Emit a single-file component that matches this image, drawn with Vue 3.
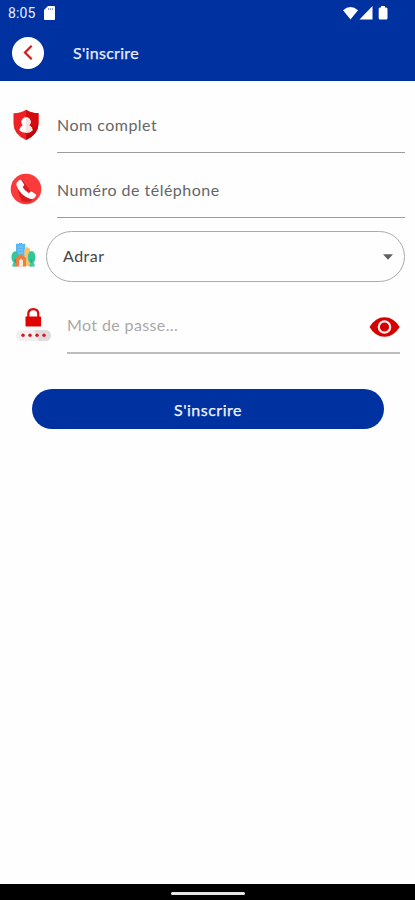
<script setup>
import { ref } from 'vue'

const fullName = ref('')
const phone = ref('')
const password = ref('')
const city = ref('Adrar')
const visible = ref(false)
</script>

<template>
  <div class="screen">
    <div class="status">
      <span class="time">8:05</span>
      <svg class="card" width="11" height="14" viewBox="0 0 11 14"><path d="M4 0H10Q11 0 11 1V13Q11 14 10 14H1Q0 14 0 13V4Z" fill="#fff" /><path d="M4.5 2.2V4M6.5 2.2V4M8.5 2.2V4" stroke="#7d91cf" stroke-width="1" /></svg>
      <svg class="signals" width="46" height="15" viewBox="0 0 46 15" fill="#fff">
        <path d="M0 4.2Q7.5 -2.2 15 4.2L7.5 13.5Z" />
        <path d="M29.5 0V13.5H16.5Z" />
        <path d="M38 0H42V1.5H43.2Q44.5 1.5 44.5 3V12Q44.5 13.5 43.2 13.5H37Q35.7 13.5 35.7 12V3Q35.7 1.5 37 1.5H38Z" />
      </svg>
    </div>
    <header class="bar">
      <button class="back" aria-label="Retour">
        <svg width="32" height="32" viewBox="0 0 32 32"><path d="M19.7 8.8L13 15.5L19.7 22.2" fill="none" stroke="#d91919" stroke-width="2.2" /></svg>
      </button>
      <h1>S'inscrire</h1>
    </header>

    <main>
      <div class="row name">
        <svg class="shield" width="28" height="32" viewBox="0 0 28 32">
          <path d="M14 .8Q19 4.3 26.5 4.2V15Q26.2 25.5 14 31Q1.8 25.5 1.5 15V4.2Q9 4.3 14 .8Z" fill="#ed2025" />
          <path d="M14 .8Q19 4.3 26.5 4.2V15Q26.2 25.5 14 31Z" fill="#d60b10" />
          <path d="M14 25.5Q20 25.5 20 21L26 15Q25.5 25 15 30.5Z" fill="#bd0509" />
          <circle cx="14" cy="13" r="4.7" fill="#fff" />
          <path d="M11.3 16H16.7Q20.5 17.5 20.5 21.5Q18 23.7 14 23.7Q10 23.7 7.5 21.5Q7.5 17.5 11.3 16Z" fill="#fff" />
          <path d="M14 8.4Q18.7 8.5 18.7 13Q18.5 15.5 16.7 16.5Q20.3 18 20.5 21.5Q18 23.7 14 23.7Z" fill="#f3e4e4" />
        </svg>
        <input v-model="fullName" placeholder="Nom complet">
      </div>
      <div class="row phone">
        <svg class="call" width="32" height="32" viewBox="0 0 32 32">
          <circle cx="16" cy="16" r="15.3" fill="#fa3a3b" />
          <path d="M12 7L24.5 23L21 28.5Q16 30 11.5 28L8 18Z" fill="#d91d20" />
          <path d="M7.2 9.1L9.3 7Q10.5 6.2 11.5 7.6L14 11.2Q14.6 12.3 13.6 13.1L12.6 14Q14.5 17.8 19 20.2L20.2 18.8Q21 18.1 22 18.7L25.7 21.2Q26.8 22.2 25.8 23.3L24 25.2Q22.4 26.4 20 25.7Q10.2 22.6 6.5 12.6Q6 10.5 7.2 9.1Z" fill="#fff" />
        </svg>
        <input v-model="phone" placeholder="Numéro de téléphone">
      </div>
      <div class="row place">
        <svg class="city" width="25" height="25" viewBox="0 0 25 25">
          <path d="M5 .8H8V0H11V.8H14.3V23H5Z" fill="#58b8f7" />
          <path d="M7 4H12M7 7H12M7 10H12" stroke="#7dcbfb" stroke-width="1" />
          <path d="M13.3 6.5L16 3.8L19 6V23H13.3Z" fill="#f9c468" />
          <ellipse cx="4.2" cy="14.3" rx="3.7" ry="6" fill="#35c69b" />
          <ellipse cx="20.6" cy="14.3" rx="3.8" ry="6.3" fill="#34c699" />
          <path d="M4.2 16V23.5M20.6 16V23.5" stroke="#2cab88" stroke-width="1.5" />
          <path d="M2 20H6V23.5H1ZM19 20H23L24 23.5H18Z" fill="#42c99d" />
          <path d="M5 23.5V15L10 11L15 15V23.5Z" fill="#f7793d" />
          <path d="M8 23.5V17.5L10 15.5L12 17.5V23.5Z" fill="#e9efea" />
        </svg>
        <button class="select">
          <span>{{ city }}</span>
          <svg width="10" height="6" viewBox="0 0 10 6"><path d="M0 .3H10L5 5.7Z" fill="#606060" /></svg>
        </button>
      </div>
      <div class="row secret">
        <svg class="lock" width="35" height="34" viewBox="0 0 35 34">
          <rect x="0" y="22" width="35" height="11" rx="5.5" fill="#f5eeef" />
          <path d="M18 22H29.5A5.5 5.5 0 0 1 29.5 33H23Z" fill="#dfdbdd" />
          <path d="M12.3 10V6.5Q12.3 1.2 17.3 1.2Q22.3 1.2 22.3 6.5V10" fill="none" stroke="#d90b0b" stroke-width="2.2" />
          <rect x="9.5" y="8.5" width="15.6" height="10" rx=".8" fill="#df0303" />
          <g fill="#d41825"><circle cx="7" cy="27.2" r="1.7" /><circle cx="14" cy="27.2" r="1.7" /><circle cx="21" cy="27.2" r="1.7" /><circle cx="28" cy="27.2" r="1.7" /></g>
        </svg>
        <label class="password">
          <input v-model="password" :type="visible ? 'text' : 'password'" placeholder="Mot de passe...">
          <svg width="31" height="20" viewBox="0 0 31 20" @click="visible = !visible">
            <path d="M.5 10Q6.3 .2 15.5 .2T30.7 10Q24.7 19.8 15.5 19.8T.5 10Z" fill="#d50000" />
            <circle cx="15.5" cy="10" r="5.7" fill="none" stroke="#fff0f0" stroke-width="2.2" />
          </svg>
        </label>
      </div>
      <button class="submit">S'inscrire</button>
    </main>
    <footer><span></span></footer>
  </div>
</template>

<style>
body { background: #fff; }
</style>

<style scoped>
* { box-sizing: border-box; }
.screen { width: 415px; height: 900px; display: flex; flex-direction: column; background: #fefefe; font-family: Lato, sans-serif; overflow: hidden; }
button { border: 0; padding: 0; font: inherit; }
svg { display: block; flex: none; }
.status { height: 26px; flex: none; display: flex; align-items: center; background: #0031a0; padding: 0 26px 0 8px; color: #e8edff; }
.time { font: 14px/26px Roboto, sans-serif; width: 28px; letter-spacing: .1px; white-space: nowrap; }
.card { margin-left: 8px; }
.signals { margin-left: auto; }
.bar { height: 55px; flex: none; background: #0031a0; display: flex; align-items: center; padding: 0 0 2px 12px; }
.back { width: 32px; height: 32px; border-radius: 50%; background: #fff; }
h1 { margin: 0 0 0 29px; color: #e9edfc; font-size: 16px; line-height: 24px; font-weight: 400; letter-spacing: .3px; -webkit-text-stroke: .25px; }
main { flex: 1; display: flex; flex-direction: column; }
.row { display: flex; flex: none; }
input { display: block; min-width: 0; flex: 1; padding: 0; outline: 0; border: 0; background: transparent; color: #555; font: 16px/24px Lato, sans-serif; letter-spacing: .48px; }
input::placeholder { color: #666; opacity: 1; }
.name { height: 72px; padding: 28px 10px 0 12px; }
.name input, .phone input { height: 44px; padding-bottom: 13px; border-bottom: 1px solid #9b9b9b; }
.name input { margin-left: 17px; }
.phone { height: 65px; padding: 21px 10px 0 10px; }
.phone .call { margin-top: -1px; }
.phone input { margin-left: 15px; }
.place { height: 64px; padding: 13px 10px 0 11px; }
.city { margin-top: 12px; }
.select { flex: 1; height: 51px; margin-left: 10px; border: 1px solid #aaa; border-radius: 26px; background: transparent; display: flex; align-items: center; justify-content: space-between; padding: 0 11px 0 16px; color: #454545; font-size: 16px; letter-spacing: .5px; }
.select span { margin-top: -2px; }
.secret { height: 71px; padding: 26px 15px 0 16px; }
.password { flex: 1; display: flex; height: 46px; margin-left: 16px; border-bottom: 2px solid #bdbdbd; }
.password input { height: 32px; letter-spacing: .38px; }
.password input::placeholder { color: #a8a8a8; }
.password svg { margin-top: 9px; }
.submit { width: 352px; height: 40px; flex: none; margin: 36px 0 0 32px; border-radius: 20px; background: #0031a0; color: #f0f3fb; font-size: 16px; line-height: 24px; padding-top: 2px; letter-spacing: .5px; -webkit-text-stroke: .25px; }
footer { height: 16px; flex: none; background: #000; display: flex; justify-content: center; align-items: center; padding-top: 2px; }
footer span { width: 74px; height: 3px; background: #e4e4e4; border-radius: 2px; }
</style>
